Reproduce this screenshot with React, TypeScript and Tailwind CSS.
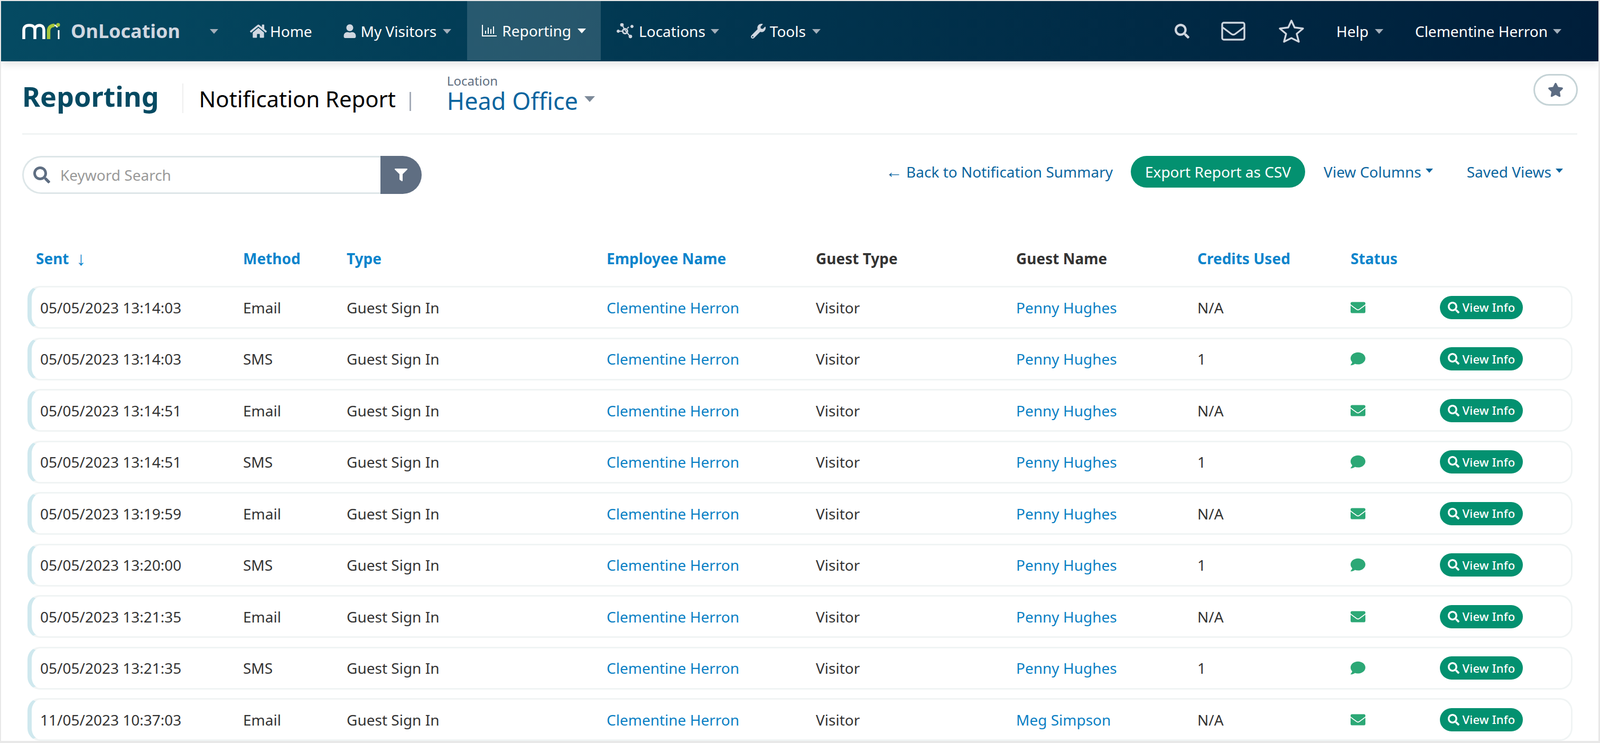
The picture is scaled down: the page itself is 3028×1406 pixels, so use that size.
import { FaComment, FaEnvelope, FaFilter, FaHome, FaSearch, FaStar, FaUser, FaWrench } from "react-icons/fa"

const rows = [
  ["05/05/2023 13:14:03", "Email", "Penny Hughes", "N/A"],
  ["05/05/2023 13:14:03", "SMS", "Penny Hughes", "1"],
  ["05/05/2023 13:14:51", "Email", "Penny Hughes", "N/A"],
  ["05/05/2023 13:14:51", "SMS", "Penny Hughes", "1"],
  ["05/05/2023 13:19:59", "Email", "Penny Hughes", "N/A"],
  ["05/05/2023 13:20:00", "SMS", "Penny Hughes", "1"],
  ["05/05/2023 13:21:35", "Email", "Penny Hughes", "N/A"],
  ["05/05/2023 13:21:35", "SMS", "Penny Hughes", "1"],
  ["11/05/2023 10:37:03", "Email", "Meg Simpson", "N/A"],
]

function NavCaret({ className = "border-t-[#a3afbb]" }: { className?: string }) {
  return <span className={`inline-block w-0 h-0 border-x-[8px] border-t-[9px] border-x-transparent ${className}`} />
}

function LinkCaret() {
  return <span className="inline-block w-0 h-0 border-x-[7px] border-t-[8px] border-x-transparent border-t-[#0b659f] ml-[8px] mb-[4px]" />
}

function MriLogo() {
  return (
    <svg width="72" height="32" viewBox="0 0 72 32" fill="none" className="shrink-0">
      <path d="M3 31V14C3 8 7 5 12 5H15C20 5 24 8 24 14V31" stroke="#fff" strokeWidth="5.5" />
      <path d="M24 14C24 8 28 5 33 5C38 5 41 9 41 14V31" stroke="#fff" strokeWidth="5.5" />
      <path d="M50 31V16C50 9 54 5 61 5" stroke="#a6c73a" strokeWidth="6.5" />
      <path d="M61 5C64 5 66 6 66 9" stroke="#fff" strokeWidth="3" />
      <path d="M69 14V31" stroke="#fff" strokeWidth="3" />
      <circle cx="68" cy="4" r="3.6" fill="#a6c73a" />
    </svg>
  )
}

function ChartIcon() {
  return (
    <svg width="28" height="24" viewBox="0 0 28 24" fill="none" stroke="#fff" strokeWidth="2" className="shrink-0">
      <path d="M1 1V22H28" />
      <path d="M7 18V12M12 18V6M17 18V9M22 18V4" />
    </svg>
  )
}

function NetworkIcon() {
  return (
    <svg width="34" height="30" viewBox="0 0 34 30" fill="#d0d7e0" stroke="#d0d7e0" className="shrink-0">
      <path d="M10 2L15 12L24 23M3 15H12M23 7L20 10" strokeWidth="2" fill="none" />
      <circle cx="10" cy="3" r="3" />
      <circle cx="3" cy="15" r="2.5" />
      <circle cx="16" cy="15" r="4.5" fill="none" strokeWidth="3" />
      <circle cx="26" cy="25" r="3" />
      <circle cx="29" cy="6" r="2.5" />
    </svg>
  )
}

function MailOutline() {
  return (
    <svg width="46" height="36" viewBox="0 0 46 36" fill="none" stroke="#d0d7e0" strokeWidth="3.4" strokeLinejoin="round" className="shrink-0">
      <rect x="2" y="2" width="42" height="32" rx="3" />
      <path d="M3 11L19 23C21.5 25 24.5 25 27 23L43 11" />
    </svg>
  )
}

function StarOutline() {
  return (
    <svg width="50" height="46" viewBox="0 0 50 46" fill="none" stroke="#d0d7e0" strokeWidth="3.4" strokeLinejoin="round" className="shrink-0">
      <path d="M25 3L31 16L47 18L35 28L39 43L25 36L11 43L15 28L3 18L19 16Z" />
    </svg>
  )
}

function Row({ row }: { row: string[] }) {
  const isEmail = row[1] === "Email"
  return (
    <div className="w-[2924px] h-[81px] mb-[16.5px] rounded-[24px] border-[3px] border-l-[8px] border-[#f0f4f4] border-l-[#cfe8ee] grid grid-cols-[384px_196px_492px_396px_379px_343px_290px_169px_1fr] items-center pl-[16px] text-[#333]">
      <span>{row[0]}</span>
      <span>{row[1]}</span>
      <span>Guest Sign In</span>
      <a className="text-[#0a7fc4]">Clementine Herron</a>
      <span>Visitor</span>
      <a className="text-[#0a7fc4]">{row[2]}</a>
      <span>{row[3]}</span>
      <span className="text-[#2ca876]">{isEmail ? <FaEnvelope size={28} /> : <FaComment size={28} />}</span>
      <button className="w-[157px] h-[44px] rounded-full bg-[#039170] text-white text-[22px] font-medium tracking-[0.2px] flex items-center justify-center gap-[6px]">
        <FaSearch size={22} />
        View Info
      </button>
    </div>
  )
}

export default function App() {
  return (
    <div className="w-[3028px] h-[1406px] overflow-hidden bg-white border-t-2 border-l-2 border-r-[3px] border-b-[4px] border-[#e8e8e8] font-['Noto_Sans',sans-serif] text-[28px]">
      <nav className="relative h-[114px] flex items-center bg-linear-to-r from-[#054a62] to-[#001e3a] text-white shadow-[0_6px_14px_rgba(0,0,0,0.1)]">
        <div className="flex items-center ml-[40px]">
          <MriLogo />
          <span className="ml-[20px] text-[36px] font-bold text-[#d0d7e0] leading-none">OnLocation</span>
          <span className="ml-[56px] flex"><NavCaret /></span>
        </div>
        <div className="flex items-center gap-[6px] ml-[60px]">
          <FaHome size={32} className="text-[#d0d7e0]" />
          <span>Home</span>
        </div>
        <div className="flex items-center gap-[8px] ml-[58px]">
          <FaUser size={26} className="text-[#d0d7e0]" />
          <span>My Visitors</span>
          <span className="ml-[4px] flex"><NavCaret /></span>
        </div>
        <div className="flex items-center gap-[10px] ml-[30px] h-[112px] px-[28px] bg-white/15 self-start">
          <ChartIcon />
          <span>Reporting</span>
          <span className="ml-[2px] flex"><NavCaret className="border-t-white" /></span>
        </div>
        <div className="flex items-center gap-[8px] ml-[30px]">
          <NetworkIcon />
          <span>Locations</span>
          <span className="ml-[2px] flex"><NavCaret /></span>
        </div>
        <div className="flex items-center gap-[8px] ml-[60px]">
          <FaWrench size={28} className="text-[#d0d7e0]" />
          <span>Tools</span>
          <span className="ml-[4px] flex"><NavCaret /></span>
        </div>
        <div className="flex items-center ml-auto mr-[70px]">
          <FaSearch size={28} className="text-[#d0d7e0]" />
          <span className="ml-[60px] flex"><MailOutline /></span>
          <span className="ml-[62px] flex"><StarOutline /></span>
          <span className="ml-[60px]">Help</span>
          <span className="ml-[12px] flex"><NavCaret /></span>
          <span className="ml-[60px]">Clementine Herron</span>
          <span className="ml-[10px] flex"><NavCaret /></span>
        </div>
      </nav>

      <div className="relative mx-[40px] h-[139px] flex items-start border-b-[3px] border-[#f0f4f4]">
        <h1 className="mt-[28px] text-[52px] font-bold leading-[76px] text-[#054a62]">Reporting</h1>
        <div className="ml-[44px] mt-[42px] w-[2px] h-[56px] bg-[#eeeeee]" />
        <span className="ml-[30px] mt-[41px] text-[42px] tracking-[-0.1px] leading-[60px] text-black">Notification Report</span>
        <div className="ml-[26px] mt-[58px] w-[3px] h-[36px] bg-[#a5acb8]" />
        <div className="ml-[68px] mt-[21px] flex flex-col">
          <span className="text-[24px] leading-[32px] text-[#5f6e80]">Location</span>
          <span className="flex items-center text-[45px] leading-[44px] text-[#0b659f]">
            Head Office
            <span className="ml-[12px] mb-[8px] w-0 h-0 border-x-[10px] border-t-[11px] border-x-transparent border-t-[#7d8a99]" />
          </span>
        </div>
        <button className="ml-auto mr-[-1px] mt-[24px] w-[84px] h-[60px] rounded-full border-[3px] border-[#c5d3d6] flex items-center justify-center text-[#5c6c82]">
          <FaStar size={30} />
        </button>
      </div>

      <div className="flex items-center justify-between ml-[40px] mr-[67px] mt-[40px] h-[72px]">
        <div className="flex h-[72px]">
          <div className="w-[678px] h-full rounded-l-full border-[3px] border-r-0 border-[#dde6e8] flex items-center pl-[18px]">
            <FaSearch size={32} className="text-[#5f6e82]" />
            <span className="ml-[19px] text-[#999999]">Keyword Search</span>
          </div>
          <div className="w-[78px] h-full rounded-r-full bg-[#5f6e82] flex items-center justify-center text-white">
            <FaFilter size={24} />
          </div>
        </div>
        <div className="flex items-center self-start h-[60px] text-[#0b659f]">
          <span><span className="font-['Liberation_Sans',sans-serif] text-[32px] leading-none">←</span> Back to Notification Summary</span>
          <button className="ml-[34px] h-[60px] px-[27px] rounded-full bg-[#039170] text-white">Export Report as CSV</button>
          <span className="ml-[35px]">View Columns</span>
          <LinkCaret />
          <span className="ml-[64px]">Saved Views</span>
          <LinkCaret />
        </div>
      </div>

      <div className="mt-[100px] ml-[66px] h-[44px] grid grid-cols-[392px_196px_492px_396px_379px_343px_290px_169px] items-center font-bold text-[#0a84cc]">
        <span className="flex items-center">Sent <span className="ml-[14px] font-normal font-['Liberation_Sans',sans-serif] text-[36px] leading-none">↓</span></span>
        <span>Method</span>
        <span>Type</span>
        <span>Employee Name</span>
        <span className="text-[#333]">Guest Type</span>
        <span className="text-[#333]">Guest Name</span>
        <span>Credits Used</span>
        <span>Status</span>
      </div>

      <div className="mt-[30px] ml-[50px]">
        {rows.map((row, i) => (
          <Row key={i} row={row} />
        ))}
      </div>
    </div>
  )
}
